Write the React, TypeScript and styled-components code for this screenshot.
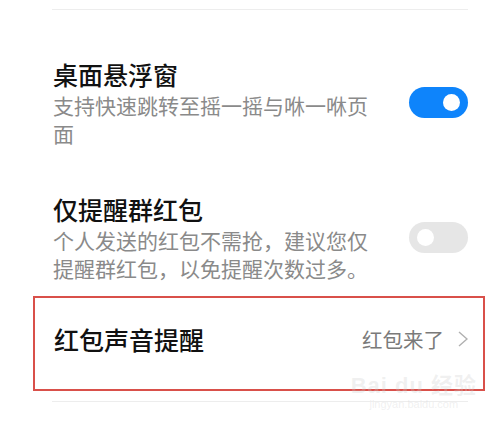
import React from 'react';
import styled, { createGlobalStyle } from 'styled-components';

const GlobalStyle = createGlobalStyle`
  html, body {
    margin: 0;
    padding: 0;
    background: #ffffff;
  }
  body {
    font-family: "Noto Sans CJK SC", "Noto Sans", sans-serif;
  }
`;

const Page = styled.div`
  position: relative;
  width: 503px;
  height: 424px;
  overflow: hidden;
  background: #ffffff;
`;

const List = styled.div`
  display: flex;
  flex-direction: column;
  padding: 9px 35px 0 52px;
`;

const Divider = styled.div<{ $gap?: number }>`
  height: 1px;
  margin-top: ${({ $gap }) => $gap || 0}px;
  background: #ededed;
`;

const Row = styled.div<{ $top: number; $bottom: number }>`
  display: flex;
  align-items: center;
  justify-content: space-between;
  padding: ${({ $top, $bottom }) => `${$top}px 0 ${$bottom}px 1px`};
`;

const TextBlock = styled.div`
  display: flex;
  flex-direction: column;
  max-width: 330px;
`;

const Title = styled.div`
  font-size: 25px;
  line-height: 32px;
  color: #111111;
  font-weight: 500;
`;

const Subtitle = styled.div`
  font-size: 21px;
  line-height: 28px;
  color: #8a8a8a;
  margin-top: 1px;
`;

const Switch = styled.div<{ $on: boolean }>`
  flex: none;
  display: flex;
  align-items: center;
  justify-content: ${({ $on }) => ($on ? 'flex-end' : 'flex-start')};
  width: 59px;
  height: 31px;
  box-sizing: border-box;
  padding: 0 8px;
  border-radius: 16px;
  background: ${({ $on }) => ($on ? '#0e84fb' : '#e6e6e6')};
`;

const Knob = styled.span`
  width: 17px;
  height: 17px;
  border-radius: 50%;
  background: #ffffff;
`;

const Highlight = styled.div`
  display: flex;
  align-items: center;
  justify-content: space-between;
  height: 95px;
  box-sizing: border-box;
  margin: 0 -17px 0 -19px;
  padding: 0 15px 10px 19px;
  border: 2px solid #d9504a;
`;

const Value = styled.div`
  display: flex;
  align-items: center;
  gap: 14px;
  font-size: 20.5px;
  color: #7a7a7a;
`;

const Watermark = styled.div`
  position: absolute;
  right: 26px;
  bottom: 13px;
  display: flex;
  flex-direction: column;
  align-items: center;
  color: rgba(205, 205, 205, 0.3);
  font-family: "Liberation Sans", "Noto Sans CJK SC", sans-serif;
  pointer-events: none;
`;

const MarkBig = styled.div`
  font-size: 22px;
  font-weight: 700;
  line-height: 24px;
  letter-spacing: 1px;
`;

const MarkSmall = styled.div`
  font-size: 11px;
  line-height: 13px;
`;

const Chevron = () => (
  <svg width="10" height="16" viewBox="0 0 10 16">
    <polyline points="1,1 9,8 1,15" fill="none" stroke="#b0b0b0" strokeWidth="1.4" />
  </svg>
);

export default function App() {
  return (
    <Page>
      <GlobalStyle />
      <List>
        <Divider />
        <Row $top={48} $bottom={23}>
          <TextBlock>
            <Title>桌面悬浮窗</Title>
            <Subtitle>支持快速跳转至摇一摇与咻一咻页面</Subtitle>
          </TextBlock>
          <Switch $on>
            <Knob />
          </Switch>
        </Row>
        <Row $top={23} $bottom={14}>
          <TextBlock>
            <Title>仅提醒群红包</Title>
            <Subtitle>个人发送的红包不需抢，建议您仅提醒群红包，以免提醒次数过多。</Subtitle>
          </TextBlock>
          <Switch $on={false}>
            <Knob />
          </Switch>
        </Row>
        <Highlight>
          <Title>红包声音提醒</Title>
          <Value>
            红包来了
            <Chevron />
          </Value>
        </Highlight>
        <Divider $gap={10} />
      </List>
      <Watermark>
        <MarkBig>Bai du 经验</MarkBig>
        <MarkSmall>jingyan.baidu.com</MarkSmall>
      </Watermark>
    </Page>
  );
}
